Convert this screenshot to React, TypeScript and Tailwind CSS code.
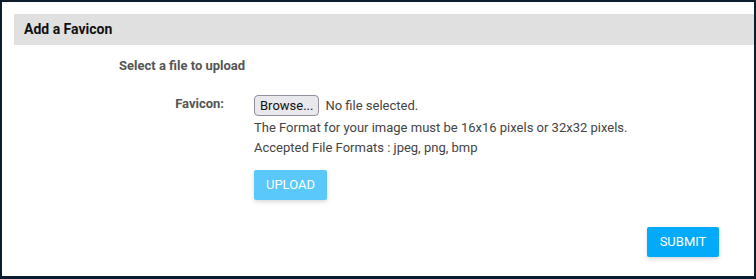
export default function App() {
  return (
    <div
      className="w-[756px] h-[279px] bg-white border-[#0b1d2c] border-t-2 border-l-2 border-r-2 border-b-[3px] pt-[12px] pl-[12px] text-[13px]"
      style={{ fontFamily: "Roboto, 'Liberation Sans', sans-serif" }}
    >
      <div className="h-[31px] bg-[#e0e0e0] flex items-center pl-[10px]">
        <h2 className="font-bold text-[14px] text-[#111]">Add a Favicon</h2>
      </div>

      <div className="pl-[105px] pt-[12px] font-bold text-[#555] leading-[18px]">
        Select a file to upload
      </div>

      <div className="flex mt-[20px]">
        <label className="w-[210px] text-right font-bold text-[#555] leading-[18px]">
          Favicon:
        </label>
        <div className="ml-[30px] text-[#444]">
          <div className="flex items-center h-[21px]">
            <button className="h-[21px] px-[5px] border border-[#8f8f9d] rounded-[4px] bg-[#e9e9ed] text-[#111] text-[13px] leading-none">
              Browse...
            </button>
            <span className="ml-[6px] text-[#444]">No file selected.</span>
          </div>
          <p className="mt-[2px] leading-[20px]">
            The Format for your image must be 16x16 pixels or 32x32 pixels.
          </p>
          <p className="leading-[20px]">Accepted File Formats : jpeg, png, bmp</p>
          <button className="mt-[12px] w-[73px] h-[30px] rounded-[2px] bg-[#5ac8fa] text-white text-[13px] shadow-[0_2px_4px_rgba(0,0,0,0.15)]">
            UPLOAD
          </button>
        </div>
      </div>

      <div className="flex justify-end pr-[35px] mt-[27px]">
        <button className="w-[72px] h-[30px] rounded-[2px] bg-[#03aafa] text-white text-[13px] shadow-[0_2px_4px_rgba(0,0,0,0.15)]">
          SUBMIT
        </button>
      </div>
    </div>
  );
}
